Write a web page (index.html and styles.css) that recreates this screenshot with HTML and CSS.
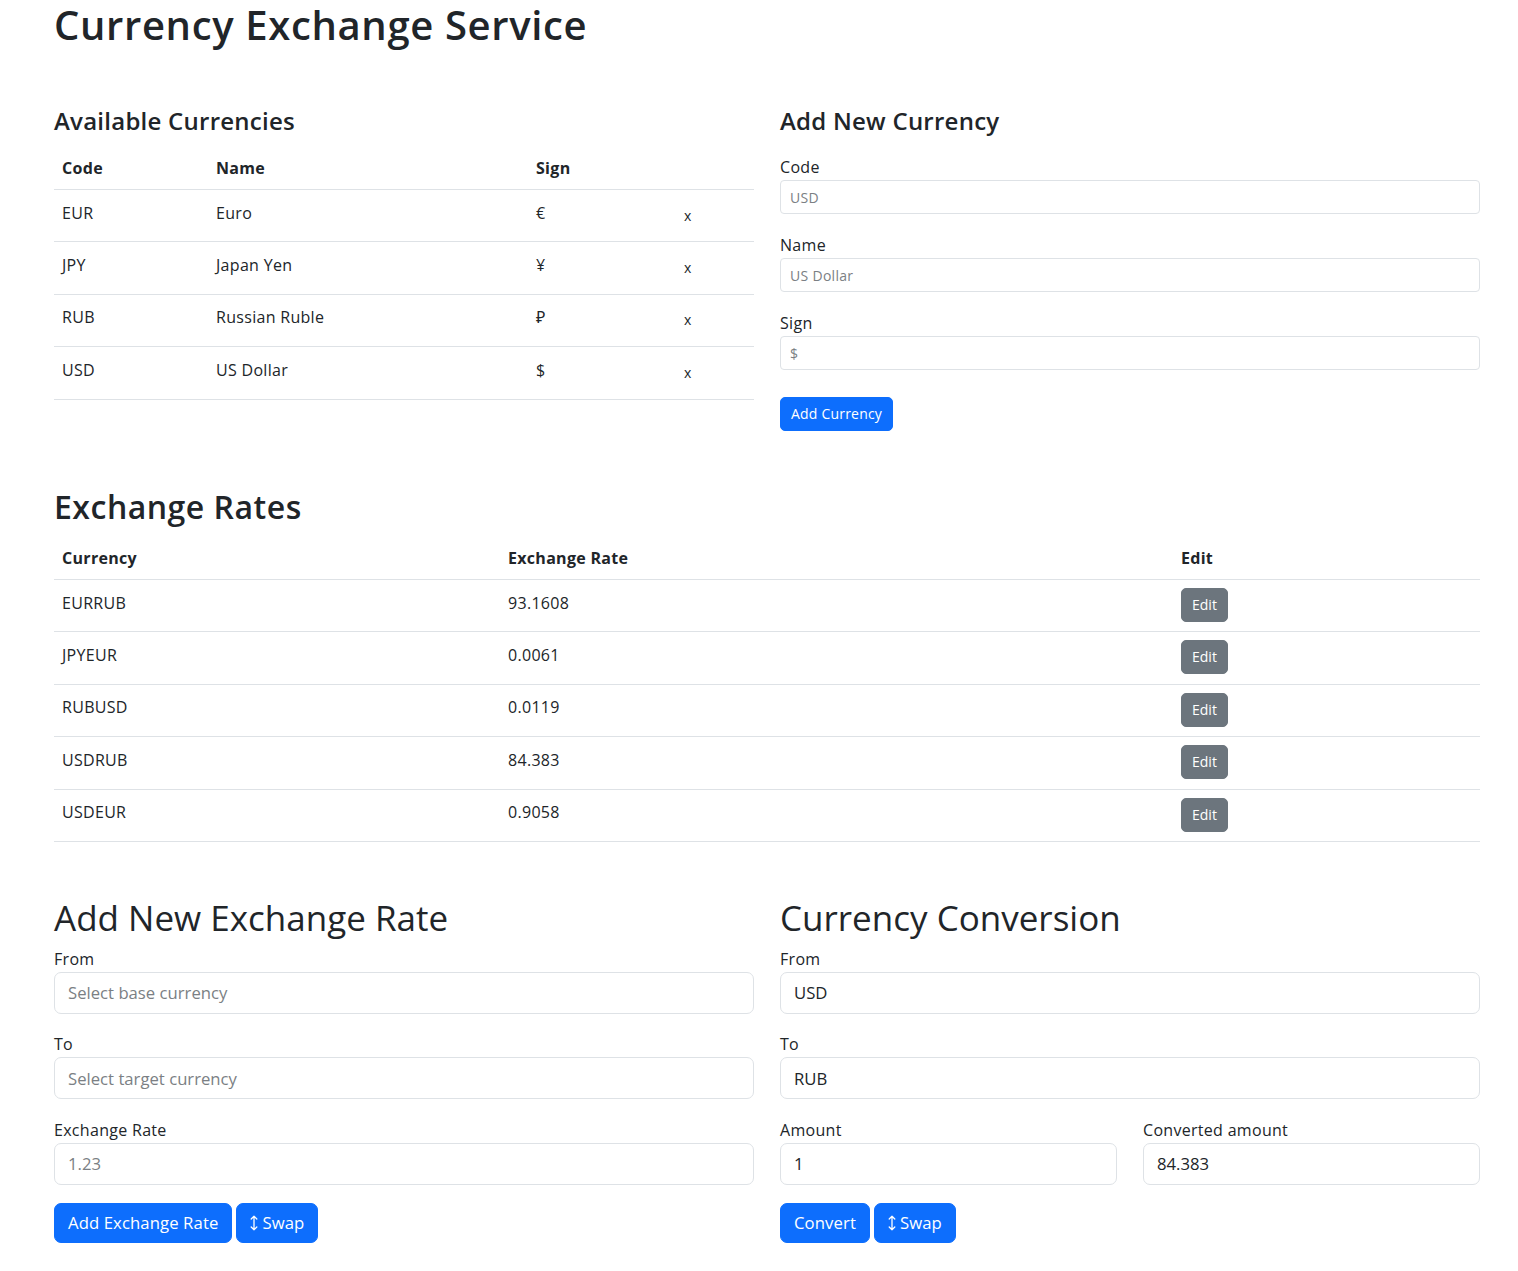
FILE: index.html
```html
<!DOCTYPE html>
<html lang="en">
<head>
<meta charset="utf-8">
<title>Currency Exchange Service</title>
<link rel="stylesheet" href="styles.css">
</head>
<body>
<div class="page">
  <h1 class="title">Currency Exchange Service</h1>

  <div class="grid2 top-row">
    <section>
      <h4 class="sub">Available Currencies</h4>
      <table class="tbl">
        <colgroup><col class="c1"><col class="c2"><col class="c3"><col class="c4"></colgroup>
        <thead>
          <tr><th>Code</th><th>Name</th><th>Sign</th><th></th></tr>
        </thead>
        <tbody>
          <tr><td>EUR</td><td>Euro</td><td>€</td><td class="del-cell"><span class="del">x</span></td></tr>
          <tr><td>JPY</td><td>Japan Yen</td><td>¥</td><td class="del-cell"><span class="del">x</span></td></tr>
          <tr><td>RUB</td><td>Russian Ruble</td><td>₽</td><td class="del-cell"><span class="del">x</span></td></tr>
          <tr><td>USD</td><td>US Dollar</td><td>$</td><td class="del-cell"><span class="del">x</span></td></tr>
        </tbody>
      </table>
    </section>
    <section>
      <h4 class="sub sub-form">Add New Currency</h4>
      <form class="form-sm">
        <div class="field-sm">
          <label class="lbl">Code</label>
          <input class="in-sm" type="text" placeholder="USD">
        </div>
        <div class="field-sm">
          <label class="lbl">Name</label>
          <input class="in-sm" type="text" placeholder="US Dollar">
        </div>
        <div class="field-sm">
          <label class="lbl">Sign</label>
          <input class="in-sm" type="text" placeholder="$">
        </div>
        <button type="button" class="btn-sm">Add Currency</button>
      </form>
    </section>
  </div>

  <section class="rates">
    <h2 class="h2">Exchange Rates</h2>
    <table class="tbl">
      <colgroup><col class="r1"><col class="r2"><col class="r3"></colgroup>
      <thead>
        <tr><th>Currency</th><th>Exchange Rate</th><th>Edit</th></tr>
      </thead>
      <tbody>
        <tr><td>EURRUB</td><td>93.1608</td><td class="edit-cell"><button type="button" class="btn-edit">Edit</button></td></tr>
        <tr><td>JPYEUR</td><td>0.0061</td><td class="edit-cell"><button type="button" class="btn-edit">Edit</button></td></tr>
        <tr><td>RUBUSD</td><td>0.0119</td><td class="edit-cell"><button type="button" class="btn-edit">Edit</button></td></tr>
        <tr><td>USDRUB</td><td>84.383</td><td class="edit-cell"><button type="button" class="btn-edit">Edit</button></td></tr>
        <tr><td>USDEUR</td><td>0.9058</td><td class="edit-cell"><button type="button" class="btn-edit">Edit</button></td></tr>
      </tbody>
    </table>
  </section>

  <div class="grid2 bottom-row">
    <section>
      <h2 class="h-big">Add New Exchange Rate</h2>
      <div class="field-lg">
        <label class="lbl">From</label>
        <input class="in-lg" type="text" placeholder="Select base currency">
      </div>
      <div class="field-lg">
        <label class="lbl">To</label>
        <input class="in-lg" type="text" placeholder="Select target currency">
      </div>
      <div class="field-lg">
        <label class="lbl">Exchange Rate</label>
        <input class="in-lg" type="text" placeholder="1.23">
      </div>
      <div class="btns">
        <button type="button" class="btn-lg">Add Exchange Rate</button>
        <button type="button" class="btn-lg"><svg class="swap-ico" width="8" height="16" viewBox="0 0 8 16" aria-hidden="true"><path d="M4 1.2V14.8M1.2 4L4 1.2L6.8 4M1.2 12L4 14.8L6.8 12" fill="none" stroke="#fff" stroke-width="1.3" stroke-linecap="round" stroke-linejoin="round"/></svg>Swap</button>
      </div>
    </section>
    <section>
      <h2 class="h-big">Currency Conversion</h2>
      <div class="field-lg">
        <label class="lbl">From</label>
        <input class="in-lg" type="text" value="USD">
      </div>
      <div class="field-lg">
        <label class="lbl">To</label>
        <input class="in-lg" type="text" value="RUB">
      </div>
      <div class="pair">
        <div class="field-lg">
          <label class="lbl">Amount</label>
          <input class="in-lg" type="text" value="1">
        </div>
        <div class="field-lg">
          <label class="lbl">Converted amount</label>
          <input class="in-lg" type="text" value="84.383">
        </div>
      </div>
      <div class="btns">
        <button type="button" class="btn-lg">Convert</button>
        <button type="button" class="btn-lg"><svg class="swap-ico" width="8" height="16" viewBox="0 0 8 16" aria-hidden="true"><path d="M4 1.2V14.8M1.2 4L4 1.2L6.8 4M1.2 12L4 14.8L6.8 12" fill="none" stroke="#fff" stroke-width="1.3" stroke-linecap="round" stroke-linejoin="round"/></svg>Swap</button>
      </div>
    </section>
  </div>
</div>
</body>
</html>
```

FILE: styles.css
```css
* { box-sizing: border-box; }

body {
  margin: 0;
  font-family: "Open Sans", "Noto Sans", "DejaVu Sans", sans-serif;
  font-size: 16px;
  line-height: 24px;
  letter-spacing: 0.3px;
  color: #212529;
  background: #fff;
}

.page {
  padding: 2px 38px 40px 54px;
}

.title {
  margin: 0;
  font-size: 40px;
  line-height: 46px;
  font-weight: 600;
  letter-spacing: 0.65px;
}

.grid2 {
  display: grid;
  grid-template-columns: 700px 700px;
  column-gap: 26px;
  align-items: start;
}

.top-row { margin-top: 58px; }

.sub {
  margin: 0 0 14px;
  font-size: 24px;
  line-height: 29px;
  font-weight: 600;
  letter-spacing: 0.25px;
}

.sub-form { margin-bottom: 20px; }

.tbl {
  width: 100%;
  border-collapse: collapse;
  table-layout: fixed;
}

.tbl th {
  text-align: left;
  font-weight: 700;
  padding: 7px 8px 9px;
  line-height: 24px;
  border-bottom: 1px solid #dee2e6;
  vertical-align: top;
}

.tbl td {
  padding: 10.5px 8px 16.9px;
  line-height: 24px;
  border-bottom: 1px solid #dee2e6;
  vertical-align: top;
}

.c1 { width: 154px; }
.c2 { width: 320px; }
.c3 { width: 148px; }
.c4 { width: 78px; }

.r1 { width: 446px; }
.r2 { width: 673px; }
.r3 { width: 307px; }

.del {
  display: block;
  margin-top: 5px;
  font-size: 14px;
  line-height: 19px;
  letter-spacing: 0;
}

.tbl td.edit-cell {
  padding: 8px 8px 9.4px;
}

.btn-edit {
  display: block;
  height: 34px;
  padding: 6px 10px;
  font-family: inherit;
  font-size: 14px;
  line-height: 20px;
  letter-spacing: 0;
  color: #fff;
  background: #6c757d;
  border: 1px solid #6c757d;
  border-radius: 5px;
}

.lbl {
  display: block;
  line-height: 24px;
  margin-bottom: 1px;
}

.field-sm { margin-bottom: 19px; }

.in-sm {
  display: block;
  width: 100%;
  height: 34px;
  padding: 5px 9px;
  font-family: inherit;
  font-size: 14px;
  line-height: 22px;
  letter-spacing: 0.3px;
  color: #212529;
  background: #fff;
  border: 1px solid #dee2e6;
  border-radius: 4px;
}

.in-sm::placeholder,
.in-lg::placeholder {
  color: #7b7f84;
  opacity: 1;
}

.btn-sm {
  display: block;
  margin-top: 27px;
  height: 34px;
  padding: 6px 10px;
  font-family: inherit;
  font-size: 14px;
  line-height: 20px;
  letter-spacing: 0.2px;
  color: #fff;
  background: #0d6efd;
  border: 1px solid #0d6efd;
  border-radius: 5px;
}

.rates { margin-top: 57px; }

.h2 {
  margin: 0 0 12.6px;
  font-size: 32px;
  line-height: 38.4px;
  font-weight: 600;
  letter-spacing: 0.5px;
}

.bottom-row { margin-top: 54px; }

.h-big {
  margin: 0 0 8px;
  font-size: 35px;
  line-height: 43px;
  font-weight: 400;
  letter-spacing: 0;
}

.field-lg { margin-bottom: 18.5px; }

.in-lg {
  display: block;
  width: 100%;
  height: 42px;
  padding: 8px 13px;
  font-family: inherit;
  font-size: 16.7px;
  line-height: 24px;
  letter-spacing: 0;
  color: #212529;
  background: #fff;
  border: 1px solid #dee2e6;
  border-radius: 7px;
}

.pair {
  display: grid;
  grid-template-columns: 1fr 1fr;
  column-gap: 26px;
}

.btns {
  display: flex;
  gap: 4px;
}

.btn-lg {
  display: flex;
  align-items: center;
  height: 40px;
  padding: 7px 13px;
  font-family: inherit;
  font-size: 16.7px;
  line-height: 24px;
  letter-spacing: 0.1px;
  color: #fff;
  background: #0d6efd;
  border: 1px solid #0d6efd;
  border-radius: 7px;
}

.swap-ico {
  margin-right: 4px;
  flex: none;
}
```
